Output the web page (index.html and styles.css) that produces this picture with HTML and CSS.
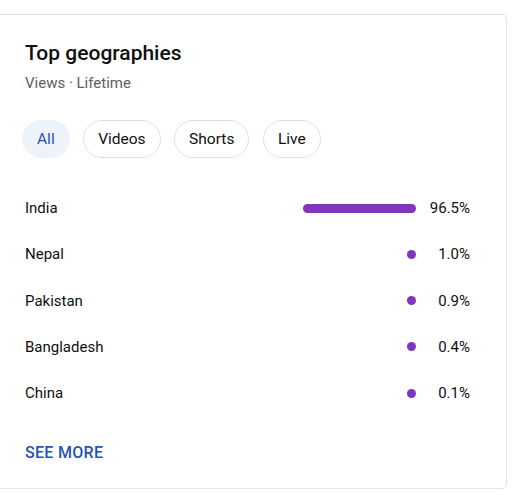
FILE: index.html
```html
<!DOCTYPE html>
<html lang="en">
<head>
    <title>Top geographies</title>
    <meta charset="UTF-8">
    <meta name="viewport" content="width=device-width, initial-scale=1.0">
    <link rel="stylesheet" href="styles.css">
</head>
<body>
    <div class="tarjeta">
        <h2 class="titulo">Top geographies</h2>
        <div class="subtitulo">Views · Lifetime</div>

        <div class="filtros">
            <button class="chip chip-activo">All</button>
            <button class="chip">Videos</button>
            <button class="chip">Shorts</button>
            <button class="chip">Live</button>
        </div>

        <div class="lista">
            <div class="fila">
                <span class="pais">India</span>
                <span class="pista"><span class="barra" style="width: 96.5%"></span></span>
                <span class="valor">96.5%</span>
            </div>
            <div class="fila">
                <span class="pais">Nepal</span>
                <span class="pista"><span class="barra" style="width: 1.0%"></span></span>
                <span class="valor">1.0%</span>
            </div>
            <div class="fila">
                <span class="pais">Pakistan</span>
                <span class="pista"><span class="barra" style="width: 0.9%"></span></span>
                <span class="valor">0.9%</span>
            </div>
            <div class="fila">
                <span class="pais">Bangladesh</span>
                <span class="pista"><span class="barra" style="width: 0.4%"></span></span>
                <span class="valor">0.4%</span>
            </div>
            <div class="fila">
                <span class="pais">China</span>
                <span class="pista"><span class="barra" style="width: 0.1%"></span></span>
                <span class="valor">0.1%</span>
            </div>
        </div>

        <a class="ver-mas" href="#">SEE MORE</a>
    </div>
</body>
</html>
```

FILE: styles.css
```css
body {
    margin: 0;
    background-color: #fff;
    font-family: Roboto, "Liberation Sans", sans-serif;
    color: #0f0f0f;
}

.tarjeta {
    box-sizing: border-box;
    width: 517px;
    margin: 14px 0 0 -10px;
    padding: 26px 36px 25px 34px;
    border: 1px solid #e3e3e3;
    border-radius: 5px;
    background-color: #fff;
}

.titulo {
    margin: 0;
    font-size: 21px;
    line-height: 24px;
    font-weight: 500;
}

.subtitulo {
    margin-top: 8px;
    font-size: 15px;
    line-height: 20px;
    color: #606060;
}

.filtros {
    display: flex;
    gap: 13.5px;
    margin: 27px 0 0 -3px;
}

.chip {
    height: 38px;
    padding: 0 14px;
    border: 1px solid #e0e0e0;
    border-radius: 19px;
    background-color: #fff;
    font-family: inherit;
    font-size: 15.5px;
    color: #0f0f0f;
    cursor: pointer;
}

.chip-activo {
    border-color: #eef3fa;
    background-color: #eef3fa;
    color: #1f55b5;
}

.lista {
    margin-top: 27px;
}

.fila {
    display: flex;
    align-items: center;
    height: 46.25px;
    font-size: 15px;
}

.pais {
    flex: 1;
}

.pista {
    display: flex;
    justify-content: flex-end;
    width: 117px;
}

.barra {
    min-width: 9px;
    height: 9px;
    border-radius: 5px;
    background-color: #8036bc;
}

.valor {
    width: 54px;
    text-align: right;
}

.ver-mas {
    display: inline-block;
    margin-top: 27px;
    font-size: 16px;
    line-height: 20px;
    font-weight: 500;
    letter-spacing: 0.3px;
    color: #1f55b5;
    text-decoration: none;
}
```
